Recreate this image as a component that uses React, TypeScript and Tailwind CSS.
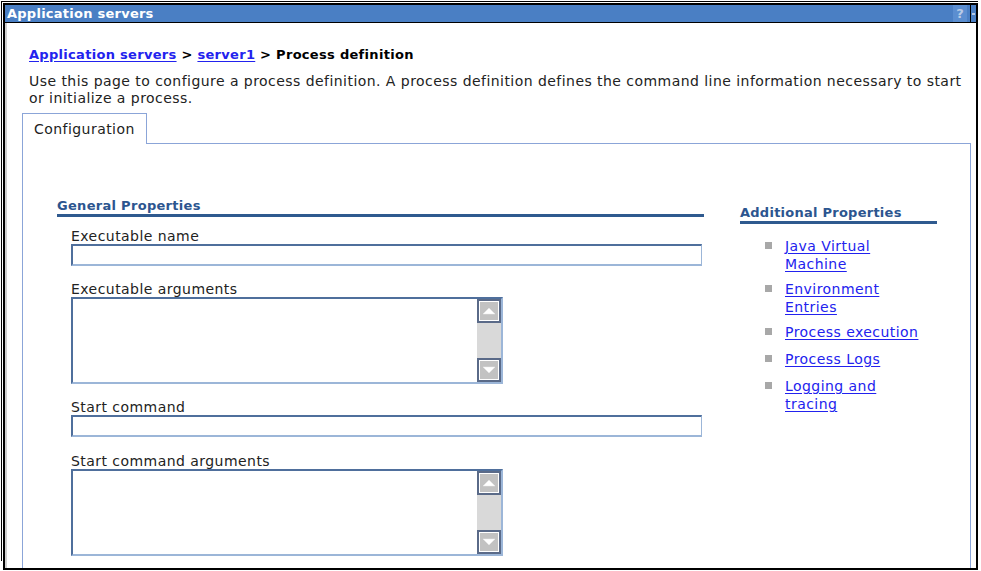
import React from "react";

const ScrollBtn = ({ up }: { up: boolean }) => (
  <div className="w-[24px] h-[24px] border-2 border-[#5a6a88] bg-white p-px">
    <div className="w-full h-full bg-[#c2c2c2] flex items-center justify-center">
      <svg width="14" height="8" viewBox="0 0 14 8">
        {up ? (
          <polygon points="1,7 7,1 13,7" fill="#ffffff" stroke="#e8e8e8" strokeWidth="0.5" />
        ) : (
          <polygon points="1,1 7,7 13,1" fill="#ffffff" stroke="#e8e8e8" strokeWidth="0.5" />
        )}
      </svg>
    </div>
  </div>
);

const TextArea = () => (
  <div className="w-[432px] h-[87px] border-t-2 border-l-2 border-b-2 border-r-2 border-t-[#4f6f9c] border-l-[#4f6f9c] border-b-[#9cb6d8] border-r-[#9cb6d8] bg-white flex justify-end">
    <div className="w-[24px] h-full flex flex-col bg-[#d9d9d9]">
      <ScrollBtn up={true} />
      <div className="flex-1" />
      <ScrollBtn up={false} />
    </div>
  </div>
);

const Input = () => (
  <div className="w-[631px] h-[22px] border-t-2 border-l-2 border-b-2 border-r border-t-[#4f6f9c] border-l-[#4f6f9c] border-b-[#9cb6d8] border-r-[#9cb6d8] bg-white" />
);

const Link = ({ children }: { children: React.ReactNode }) => (
  <a className="text-[#2222ee] underline underline-offset-2 cursor-pointer">{children}</a>
);

const Item = ({ lines, gap }: { lines: string[]; gap: "small" | "big" }) => (
  <li className={gap === "small" ? "flex items-start mb-[7px]" : "flex items-start mb-[9px]"}>
    <span className="w-[7px] h-[7px] bg-[#a8a8a8] mt-[5px] mr-[13px] shrink-0" />
    <span className="leading-[18px] text-[14px] tracking-[0.45px]">
      {lines.map((l, i) => (
        <div key={i}>
          <Link>{l}</Link>
        </div>
      ))}
    </span>
  </li>
);

export default function App() {
  return (
    <div
      className="w-[981px] h-[571px] bg-white relative overflow-hidden text-[14px] tracking-[0.45px] text-[#222]"
      style={{ fontFamily: '"DejaVu Sans", Verdana, sans-serif' }}
    >
      <div className="absolute left-[1px] top-[1px] w-[977px] h-[3px] border-t border-black" />
      <div className="absolute left-[1px] top-[1px] w-[3px] h-[560px] border-l border-black" />
      <div className="ml-[3px] mt-[3px] w-[975px] h-[567px] border-2 border-black flex flex-col">
        {/* Title bar */}
        <div className="h-[18px] bg-[#4a7fc4] border-b border-black flex items-stretch shrink-0">
          <div className="flex-1 text-white font-bold text-[13px] tracking-[0.25px] leading-[17px] pl-[2px]">
            Application servers
          </div>
          <div className="w-[14px] bg-[#5b8ed0] text-[#b9cbe6] font-bold text-[13px] tracking-normal leading-[17px] text-center">
            ?
          </div>
          <div className="w-[3px]" />
          <div className="w-[1px] bg-black" />
          <div className="w-[5px] bg-[#4a7fc4] flex items-center">
            <div className="w-[3px] h-[2px] bg-[#b9cbe6] ml-[1px]" />
          </div>
        </div>
        <div className="flex-1 flex flex-col border-l-2 border-[#d0d0d0] min-h-0">
          <div className="pl-[22px] pr-[6px]">
            <div className="mt-[23px] font-bold text-[13px] tracking-[0.3px] leading-[17px] text-black">
              <Link>Application servers</Link> &gt; <Link>server1</Link> &gt; Process definition
            </div>
            <div className="mt-[10px] leading-[17px] text-[#222]">
              Use this page to configure a process definition. A process definition defines the command line information necessary to start or initialize a process.
            </div>
          </div>
          <div className="ml-[15px] mr-[5px] mt-[6px] flex-1 flex flex-col min-h-0">
            <div className="flex h-[31px] shrink-0">
              <div className="w-[125px] border-t border-l border-r border-[#8ba5d8] pl-[11px] pt-[7px] leading-[17px] text-[#222]">
                Configuration
              </div>
              <div className="flex-1 border-b border-[#8ba5d8]" />
            </div>
            <div className="flex-1 border-l border-r border-[#8ba5d8] flex pt-[54px] pl-[34px]">
              <div className="w-[647px]">
                <div className="font-bold text-[13px] tracking-[0.3px] text-[#2c558f] leading-[15px] border-b-[3px] border-[#2f5a8f] pb-[1px]">
                  General Properties
                </div>
                <div className="pl-[14px]">
                  <div className="mt-[11px] leading-[16px]">Executable name</div>
                  <Input />
                  <div className="mt-[15px] leading-[16px]">Executable arguments</div>
                  <TextArea />
                  <div className="mt-[15px] leading-[16px]">Start command</div>
                  <Input />
                  <div className="mt-[16px] leading-[16px]">Start command arguments</div>
                  <TextArea />
                </div>
              </div>
              <div className="ml-[36px] w-[197px] pt-[7px]">
                <div className="font-bold text-[13px] tracking-[0.25px] text-[#2c558f] leading-[15px] border-b-[3px] border-[#2f5a8f] pb-[1px]">
                  Additional Properties
                </div>
                <ul className="mt-[13px] pl-[25px]">
                  <Item lines={["Java Virtual", "Machine"]} gap="small" />
                  <Item lines={["Environment", "Entries"]} gap="small" />
                  <Item lines={["Process execution"]} gap="big" />
                  <Item lines={["Process Logs"]} gap="big" />
                  <Item lines={["Logging and", "tracing"]} gap="small" />
                </ul>
              </div>
            </div>
          </div>
        </div>
      </div>
    </div>
  );
}
